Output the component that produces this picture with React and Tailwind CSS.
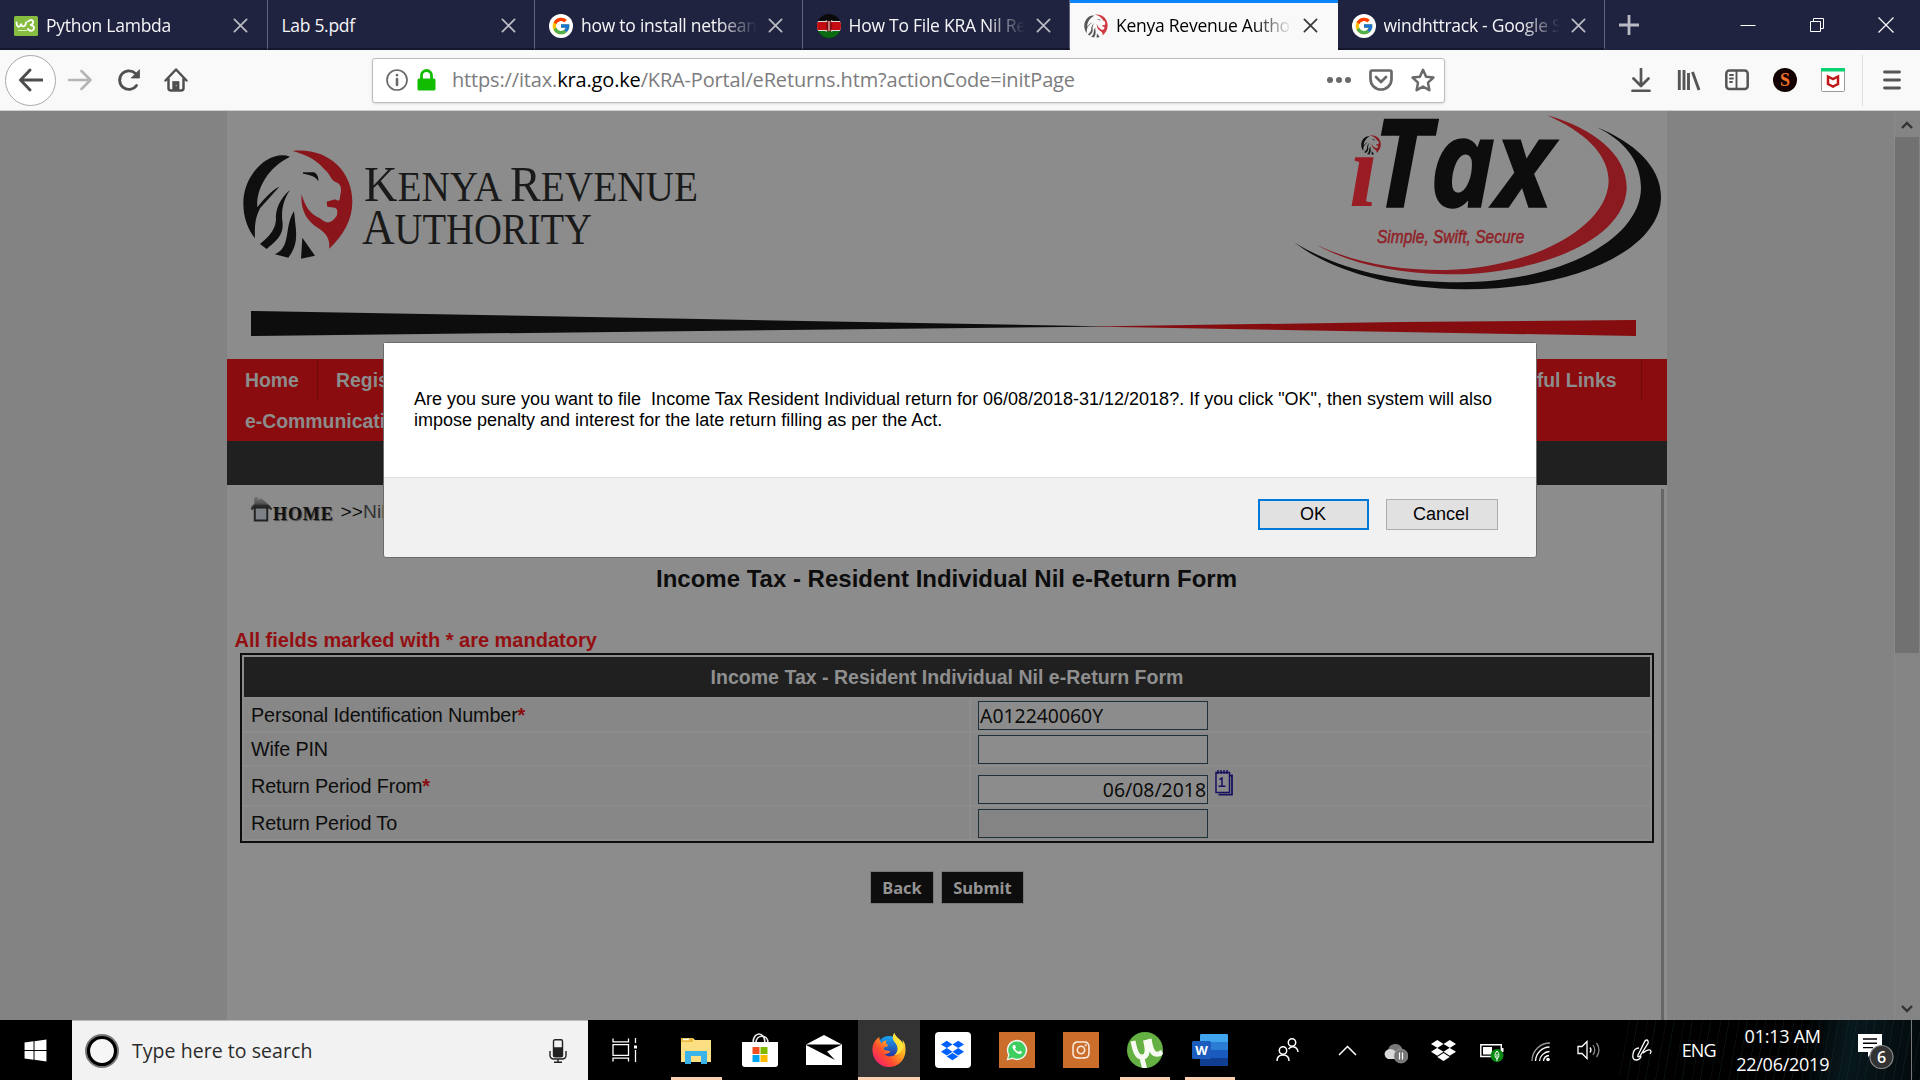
import React from "react";
import { FaDropbox, FaInstagram, FaWindows } from "react-icons/fa";
import { FcGoogle } from "react-icons/fc";

const LION = (
  <>
    <path d="M210 140C150 118 70 190 70 280c0 45 15 80 35 105-2-45 3-65 15-90l58-65c-23 10-53 45-66 62-4-52 28-117 98-152Z" />
    <path d="M210 240c-30 25-45 60-42 90-3 35-28 55-48 72l20 15c25-22 50-37 48-77-6-40 2-70 22-100Z" />
    <path d="M222 303c-22 37-17 72-27 97-7 20-20 28-30 33l40 10c20-28 25-48 23-83Z" />
    <path d="M247 383l38 54-42 9Z" />
    <path d="M249 187h33c10 5 14 16 13 27-5-12-20-19-46-23Z" />
  </>
);
const LION_FACE =
  "M218 123C320 112 397 180 397 275c0 55-27 100-69 141 2-31-10-44-28-58-30-18-60-48-55-105 10 37 25 59 55 72 18 15 30 20 50-7 5-18 0-22-5-25l-23-3-2-15 25-7c10 7 15 4 15-8 5-20 5-35-8-42-22-6-17-23-42-43-20-25-50-40-92-52Z";

function Lion({ className, dark = "#0d0d0d", red = "#8e1a20" }) {
  return (
    <svg className={className} viewBox="66 116 336 334">
      <g fill={dark}>{LION}</g>
      <path d={LION_FACE} fill={red} />
    </svg>
  );
}

function CloseX({ className }) {
  return (
    <svg className={className} viewBox="0 0 16 16" fill="none" stroke="currentColor" strokeWidth="1.9" strokeLinecap="round">
      <path d="M1.5 1.5l13 13M14.5 1.5l-13 13" />
    </svg>
  );
}

function Google() {
  return (
    <span className="flex h-6 w-6 shrink-0 items-center justify-center rounded-full bg-white">
      <FcGoogle size={20} />
    </span>
  );
}

function W3() {
  return (
    <svg className="h-5 w-6 shrink-0" viewBox="0 0 24 20">
      <rect width="24" height="20" rx="1.5" fill="#86bd40" />
      <path d="M2.5 6.5c.5 6 4 5 4.500 1 .5 4 4.500 4 5-1M14 5.500c2-2.500 6-1.500 5 1.500-.5 1.500-2 2-3 2 3 0 5 2 3.500 4.500-1.500 2-4.500 1.500-5.500-.5" fill="none" stroke="#fff" strokeWidth="1.800" strokeLinecap="round" />
      <path d="M4 14.500h9" stroke="#dcefc6" strokeWidth="1" />
    </svg>
  );
}

function KenyaFlag() {
  return (
    <svg className="h-6 w-6 shrink-0" viewBox="0 0 24 24">
      <clipPath id="flagClip"><circle cx="12" cy="12" r="12" /></clipPath>
      <g clipPath="url(#flagClip)">
        <rect width="24" height="24" fill="#0a0a0a" />
        <rect y="7" width="24" height="10" fill="#ddd" />
        <rect y="8" width="24" height="8" fill="#c40d12" />
        <rect y="17" width="24" height="7" fill="#0b6b12" />
        <path d="M9 6l6 12M15 6L9 18" stroke="#bbb" strokeWidth="1" />
        <ellipse cx="12" cy="12" rx="3.200" ry="5.500" fill="#8a0b0e" />
        <path d="M12 7v10" stroke="#eee" strokeWidth="1" />
      </g>
    </svg>
  );
}

const TABS = [
  { title: "Python Lambda", icon: <W3 /> },
  { title: "Lab 5.pdf" },
  { title: "how to install netbeans", icon: <Google /> },
  { title: "How To File KRA Nil Returns", icon: <KenyaFlag /> },
  { title: "Kenya Revenue Authority", icon: <Lion className="h-6 w-6 shrink-0" dark="#555" red="#cf3a40" />, active: true },
  { title: "windhttrack - Google Search", icon: <Google /> },
];

function TabBar() {
  return (
    <div className="flex h-[50px] bg-[#20233f] text-white">
      {TABS.map((t) => (
        <div
          key={t.title}
          className={
            t.active
              ? "flex w-[267.5px] shrink-0 items-center border-t-[3px] border-[#0a84ff] bg-[#f9f9fa] pb-[2px] pl-[14px] text-black"
              : "flex w-[267.5px] shrink-0 items-center border-r border-b-2 border-r-[#626479] border-b-[#14162b] pt-[3px] pl-[14px] text-[#f5f5f8]"
          }
        >
          {t.icon}
          <div className={t.icon ? "ml-2 w-[176px] overflow-hidden whitespace-nowrap text-[17.5px] tracking-[-0.25px] [mask-image:linear-gradient(to_right,#000_78%,transparent_100%)]" : "w-[208px] overflow-hidden whitespace-nowrap text-[17.5px] tracking-[-0.3px]"}>
            {t.title}
          </div>
          <CloseX className={t.active ? "ml-[11px] h-[15px] w-[15px] text-[#3a3a3c]" : "ml-[11px] h-[15px] w-[15px] text-[#b9bac4]"} />
        </div>
      ))}
      <div className="flex grow items-center pl-[13px]">
        <svg className="h-[22px] w-[22px]" viewBox="0 0 22 22" stroke="#b9bac4" strokeWidth="2.800"><path d="M1 11h20M11 1v20" /></svg>
        <div className="ml-auto flex">
          <div className="flex w-[69px] justify-center"><svg className="h-4 w-4" viewBox="0 0 16 16" stroke="#fff"><path d="M.5 8.500h15" /></svg></div>
          <div className="flex w-[69px] justify-center"><svg className="h-4 w-4" viewBox="0 0 16 16" stroke="#fff" fill="none"><path d="M1.500 4.500h10v10h-10zM4.500 4.500v-3h10v10h-3" /></svg></div>
          <div className="flex w-[69px] justify-center"><svg className="h-4 w-4" viewBox="0 0 16 16" stroke="#fff" strokeWidth="1.200"><path d="M.5.5l15 15M15.500.5l-15 15" /></svg></div>
        </div>
      </div>
    </div>
  );
}

function Ico({ children, className = "text-[#555557]", w = 2.5 }) {
  return (
    <svg className={"h-6 w-6 shrink-0 " + className} viewBox="0 0 24 24" fill="none" stroke="currentColor" strokeWidth={w} strokeLinecap="round" strokeLinejoin="round">
      {children}
    </svg>
  );
}

function Toolbar() {
  return (
    <div className="flex h-[61px] items-center border-b border-[#cfcfcf] bg-[#f9f9fa] pl-[5px]">
      <div className="flex h-[51px] w-[51px] items-center justify-center rounded-full border border-[#a9a9ab] bg-white">
        <Ico className="text-[#4d4d4f]" w={2.900}><path d="M23 12H2M11 2L1.500 12l9.500 10" /></Ico>
      </div>
      <Ico className="ml-3 text-[#b4b4b6]"><path d="M1 12h21M13.500 3l9 9-9 9" /></Ico>
      <Ico className="ml-[25px] text-[#505052]" w={2.800}><path d="M19.500 17.500A9.300 9.300 0 1 1 18.500 5.500" /><path d="M22.500 2v8H14.500z" fill="currentColor" strokeWidth=".8" /></Ico>
      <Ico className="ml-[23px] text-[#505052]" w={2.500}><path d="M1.500 12.500L12 1.500l10.500 11M4.500 11v9q0 2.500 2.500 2.500h10q2.500 0 2.500-2.500v-9" /><path d="M9 13.500h6v8.500H9z" fill="currentColor" strokeWidth=".8" /><path d="M12.300 17.500v.1" stroke="#aaa" strokeWidth="1.500" /></Ico>
      <div className="ml-[184px] flex h-[45px] w-[1073px] items-center rounded-[3px] border border-[#bdbdbf] bg-white pl-[12px] shadow-sm">
        <Ico className="text-[#6a6a6c]" w={1.700}><circle cx="12" cy="12" r="10" /><path d="M12 11v6M12 7v.2" strokeWidth="2.600" /></Ico>
        <svg className="ml-[8px] h-[22px] w-[19px]" viewBox="0 0 19 22"><path d="M4.500 10V6.500a5 5 0 0 1 10 0V10" fill="none" stroke="#12bc00" strokeWidth="2.800" /><rect x=".5" y="9.500" width="18" height="12" rx="1.500" fill="#12bc00" /></svg>
        <div className="ml-[16px] whitespace-nowrap text-[20px] tracking-[-0.160px] text-[#7c7c7e]">
          https://itax.<span className="text-black">kra.go.ke</span>/KRA-Portal/eReturns.htm?actionCode=initPage
        </div>
        <div className="mr-[9px] ml-auto flex gap-[18px] text-[#69696b]">
          <svg className="h-6 w-6" viewBox="0 0 24 24" fill="currentColor"><circle cx="3" cy="12" r="3" /><circle cx="12" cy="12" r="3" /><circle cx="21" cy="12" r="3" /></svg>
          <Ico className="text-[#69696b]" w={2.700}><path d="M3 2.500h18a1.500 1.500 0 0 1 1.500 1.500v7a10.500 10.500 0 0 1-21 0V4A1.500 1.500 0 0 1 3 2.500zM7 9l5 5 5-5" /></Ico>
          <Ico className="text-[#69696b]" w={2.500}><path d="M12 1.800l3.100 6.900 7.300.9-5.400 5.100 1.400 7.500L12 18.600l-6.400 3.600L7 14.700 1.600 9.600l7.300-.9z" /></Ico>
        </div>
      </div>
      <Ico className="ml-[184px] text-[#555557]" w={2.700}><path d="M12 1v16M4.500 10.500L12 18l7.500-7.500M3.500 22.800h17" /></Ico>
      <Ico className="ml-6 text-[#555557]"><path d="M2.300 2v20M7 2v20M11.500 5v17M15.500 4l6.500 18" strokeWidth="2.900" strokeLinecap="butt" /></Ico>
      <Ico className="ml-6 text-[#555557]" w={2.500}><rect x="1.300" y="2.500" width="21.400" height="18.500" rx="3" /><path d="M11.500 3v18M5 7h3M5 10.500h3M5 14h2" strokeWidth="1.900" /></Ico>
      <div className="ml-6 flex h-6 w-6 items-center justify-center rounded-full bg-[#120000] font-['Liberation_Serif'] text-[18px] font-bold text-[#f0702a]">S</div>
      <svg className="ml-6 h-6 w-6" viewBox="0 0 24 24"><rect x=".5" y=".5" width="23" height="23" rx="1" fill="#fff" stroke="#999" /><rect width="24" height="3.500" fill="#08d171" /><path d="M7 8.500l5 2.500 5-2.500v7.500L12 18.500 7 16z" fill="none" stroke="#c01818" strokeWidth="2.500" /></svg>
      <div className="ml-[17px] h-[51px] w-px bg-[#dedee0]" />
      <Ico className="ml-[17px] text-[#555557]" w={2.800}><path d="M4.500 4h15M4.500 12h15M4.500 20h15" /></Ico>
    </div>
  );
}

function Header() {
  return (
    <div className="flex h-[248px] flex-col">
      <div className="flex h-[192px] justify-between">
        <svg className="h-[192px] w-[480px]" viewBox="21 3 1440 576">
          <g fill="#0f0f0f">{LION}</g>
          <path d={LION_FACE} fill="#8a151b" />
          <g fill="#1a1a1a" fontFamily="'Liberation Serif', serif">
            <text x="432" y="273" fontSize="152" textLength="1002" lengthAdjust="spacingAndGlyphs">K<tspan fontSize="129">ENYA </tspan>R<tspan fontSize="129">EVENUE</tspan></text>
            <text x="426" y="403" fontSize="152" textLength="690" lengthAdjust="spacingAndGlyphs">A<tspan fontSize="130">UTHORITY</tspan></text>
          </g>
        </svg>
        <svg className="h-[192px] w-[400px]" viewBox="81 33 1200 576">
          <path fill="#8a1a1f" d="M922 46C1060 85 1162 165 1160 265 1155 420 900 525 620 523 460 520 330 490 230 435 350 490 480 512 620 510 860 505 1100 390 1106 245 1106 160 1030 95 922 46Z" />
          <path fill="#0d0d0d" d="M1070 82C1180 125 1263 200 1263 290 1263 450 1000 570 670 568 450 565 270 510 162 427 290 505 450 547 660 547 960 545 1200 420 1203 265 1203 180 1150 120 1070 82Z" />
          <g transform="translate(351 84) scale(.18)">
            <g fill="#0d0d0d">{LION}</g>
            <path d={LION_FACE} fill="#8a1a1f" />
          </g>
          <text x="328" y="318" fontFamily="'Liberation Serif', serif" fontSize="318" fontWeight="bold" fontStyle="italic" fill="#9a1c24" textLength="86" lengthAdjust="spacingAndGlyphs">ı</text>
          <text x="398" y="320" fontFamily="'Open Sans', sans-serif" fontSize="368" fontWeight="bold" fontStyle="italic" fill="#0d0d0d" stroke="#0d0d0d" strokeWidth="5" textLength="540" lengthAdjust="spacingAndGlyphs">Tax</text>
          <text x="411" y="430" fontFamily="'Liberation Sans', sans-serif" fontSize="56" fontStyle="italic" fill="#8f2228" stroke="#8f2228" strokeWidth="1.500" textLength="442" lengthAdjust="spacingAndGlyphs">Simple, Swift, Secure</text>
        </svg>
      </div>
      <svg className="h-[56px] w-[1440px]" viewBox="227 303 1440 56">
        <path d="M251 311L700 319 1110 326.500 700 331 251 336Z" fill="#0d0d0d" />
        <path d="M1090 326.500L1400 322 1636 320V336L1400 332Z" fill="#850d10" />
      </svg>
    </div>
  );
}

function Nav() {
  return (
    <>
      <div className="flex h-[82px] flex-col bg-[#8a0c0e] text-[19.4px] font-bold text-[#8c8c8c]">
        <div className="flex h-[41px] items-center leading-none">
          <div className="flex h-full w-[91px] items-center border-r border-[#6b0a0b] pt-[2px] pl-[18px]">Home</div>
          <div className="pt-[2px] pl-[18px]">Registration</div>
          <div className="ml-auto flex h-full items-center border-r border-[#6b0a0b] pt-[2px] pr-[24.5px]">Useful Links</div>
          <div className="w-[25px]" />
        </div>
        <div className="flex h-[41px] items-center pt-[2px] pl-[18px] leading-none">e-Communication</div>
      </div>
      <div className="h-[44px] bg-[#202020]" />
    </>
  );
}

function Calendar() {
  return (
    <svg className="mt-[3px] ml-[7px] h-[26px] w-[18px] self-start" viewBox="0 0 18 26" fill="none" stroke="#17125f" strokeWidth="1.500">
      <path d="M3.500 24.700H17V5.500h-2" strokeWidth="1.800" />
      <path d="M1 2.500h13.500v20H1z" fill="#8a8a8c" />
      <path d="M3 0v4M6 0v4M9 0v4M12 0v4" />
      <path d="M4.500 9.500L7 8v8M3.500 16.200h7" strokeWidth="1.500" />
    </svg>
  );
}

const ROWS = [
  { label: "Personal Identification Number", req: true, value: "A012240060Y", row: "flex h-[32px] gap-[2px]", field: "bg-[#8c8c8c]" },
  { label: "Wife PIN", row: "flex h-[32px] gap-[2px]", field: "bg-[#8c8c8c]" },
  { label: "Return Period From", req: true, value: "06/08/2018", row: "flex h-[38px] gap-[2px]", field: "mt-[6px] justify-end bg-[#8c8c8c]", cal: true },
  { label: "Return Period To", row: "flex h-[32px] gap-[2px]", field: "bg-[#848484]" },
];

function Form() {
  return (
    <div className="ml-[13px] w-[1414px] border-2 border-[#0d0d0d] p-[2px]">
      <div className="flex h-[40px] items-center justify-center bg-[#202020] pt-px text-[19.55px] font-bold text-[#8f8f8f]">
        Income Tax - Resident Individual Nil e-Return Form
      </div>
      <div className="flex flex-col gap-[2px] pt-[2px]">
        {ROWS.map((r) => (
          <div key={r.label} className={r.row}>
            <div className="flex w-[725px] items-center bg-[#878787] pt-px pl-[7px] text-[19.8px] tracking-[-0.130px] text-[#0d0d0d]">
              {r.label}
              {r.req && <span className="font-bold text-[#8a0c0e]">*</span>}
            </div>
            <div className="flex grow items-center bg-[#878787] pl-[7px]">
              <div className={"flex h-[29px] w-[230px] items-center border border-[#1f303d] px-[1px] pt-px font-['Noto_Sans'] text-[19.400px] text-[#0d0d0d] " + r.field}>
                {r.value}
              </div>
              {r.cal && <Calendar />}
            </div>
          </div>
        ))}
      </div>
    </div>
  );
}

function Page() {
  return (
    <div className="flex h-[909px] overflow-hidden bg-[#838383] font-['Liberation_Sans',sans-serif]">
      <div className="ml-[227px] flex w-[1440px] flex-col bg-[#8c8c8c]">
        <Header />
        <Nav />
        <div className="mt-1 mr-[3px] flex grow flex-col border-r-[3px] border-[#666]">
          <div className="flex h-[64px] items-start pt-2 pl-[23px]">
            <svg className="h-[25px] w-[23px]" viewBox="0 0 23 26">
              <defs><linearGradient id="hg" x2="0" y2="1"><stop stopColor="#777" /><stop offset="1" stopColor="#333" /></linearGradient></defs>
              <path d="M4 0h4v3l3-2 10 9v2H1V10l3-3z" fill="url(#hg)" />
              <path d="M4.500 11h13v13.500h-13z" fill="#7b8186" stroke="#222" strokeWidth="2" />
              <path d="M1 13l4-4h13l4 4" fill="none" stroke="#2a2a2a" strokeWidth="2" />
            </svg>
            <span className="mt-[5px] font-['Liberation_Serif'] text-[18px] leading-[24px] font-bold tracking-[0.900px] text-[#111] [text-shadow:1px_1px_1px_#444]">HOME</span>
            <span className="mt-[3px] ml-[7px] text-[19.200px] leading-[24px] text-[#0d0d0d]">&gt;&gt;<span className="text-[#333]">Nil Return</span></span>
          </div>
          <h1 className="mt-[11px] pl-[5px] text-center text-[24px] leading-[30px] font-bold text-[#0d0d0d]">
            Income Tax - Resident Individual Nil e-Return Form
          </h1>
          <p className="mt-[34px] mb-px ml-[7.500px] text-[20px] leading-[24px] font-bold text-[#930f12]">All fields marked with * are mandatory</p>
          <Form />
          <div className="mt-[28px] ml-[643px] flex gap-[7px] font-['Noto_Sans'] text-[16.500px] font-bold text-[#939393]">
            <div className="flex h-[33px] w-[64px] items-center justify-center border border-[#787878] bg-[#0d0d0d] pt-px">Back</div>
            <div className="flex h-[33px] w-[83px] items-center justify-center border border-[#787878] bg-[#0d0d0d] pt-px">Submit</div>
          </div>
        </div>
      </div>
      <div className="ml-auto flex w-[26px] flex-col items-center border-l border-[#8a8a8a] bg-[#848484] pr-px">
        <svg className="mt-[10px] mb-[8px] h-2 w-3" viewBox="0 0 12 8" fill="none" stroke="#333" strokeWidth="2.400"><path d="M1 7l5-5 5 5" /></svg>
        <div className="h-[516px] w-6 bg-[#717171]" />
        <svg className="mt-auto mb-[7px] h-2 w-3" viewBox="0 0 12 8" fill="none" stroke="#333" strokeWidth="2.400"><path d="M1 1l5 5 5-5" /></svg>
      </div>
    </div>
  );
}

function Dialog() {
  return (
    <div className="absolute top-[342px] left-[383px] flex h-[216px] w-[1154px] flex-col rounded-[3px] border border-[#6b6b6b] bg-[#f1f1f1] font-['Liberation_Sans',sans-serif] text-[18px] text-black">
      <div className="h-[135px] border-b border-[#dfdfdf] bg-white pt-[46px] pl-[30px] leading-[21px] whitespace-pre">
        <div>{'Are you sure you want to file  Income Tax Resident Individual return for 06/08/2018-31/12/2018?. If you click "OK", then system will also'}</div>
        <div>impose penalty and interest for the late return filling as per the Act.</div>
      </div>
      <div className="mt-[21px] mr-[38px] flex justify-end gap-[17px]">
        <div className="flex h-[31px] w-[111px] items-center justify-center border-2 border-[#0078d7] bg-[#e1e1e1] pr-px pb-px">OK</div>
        <div className="flex h-[31px] w-[112px] items-center justify-center border border-[#adadad] bg-[#e1e1e1] pr-[2px] pb-px">Cancel</div>
      </div>
    </div>
  );
}

const APPS = [
  { id: "files", open: "w-[51px]", icon: (
    <svg className="h-[27px] w-8" viewBox="0 0 32 27"><path d="M1 1h12l2 2h16v22H1z" fill="#fcdf83" /><path d="M1 1h12v4H1z" fill="#eabb3f" /><path d="M3 2.500h6" stroke="#fff" strokeWidth="1.500" /><path d="M5 27V14h22v13h-6v-8H11v8z" fill="#3ab3e8" /></svg>) },
  { id: "store", icon: (
    <svg className="h-[34px] w-9" viewBox="0 0 36 34"><path d="M12 10c0-12 12-12 12 0M15 10c0-9 12-9 12 0" fill="none" stroke="#eee" strokeWidth="1.600" transform="translate(-1)" /><path d="M0 9h36v22q0 3-3 3H3q-3 0-3-3z" fill="#fff" /><path d="M10.500 14h7v7h-7z" fill="#f25022" /><path d="M18.500 14h7v7h-7z" fill="#7fba00" /><path d="M10.500 22h7v7h-7z" fill="#00a4ef" /><path d="M18.500 22h7v7h-7z" fill="#ffb900" /></svg>) },
  { id: "mail", icon: (
    <svg className="h-[30px] w-9" viewBox="0 0 36 30"><path d="M0 9.500L18 0l18 9.500V30H0z" fill="#fff" /><path d="M0 9.500h36L21 16.500 29 25 0 10z" fill="#000" /></svg>) },
  { id: "firefox", open: "w-[62px]", active: true, icon: (
    <svg className="h-[34px] w-[34px]" viewBox="0 0 34 34">
      <defs>
        <linearGradient id="ff1" x1="1" y1="0" x2="0" y2="1"><stop stopColor="#fff44f" /><stop offset=".35" stopColor="#ffb01f" /><stop offset=".65" stopColor="#ff4a2f" /><stop offset="1" stopColor="#e8118f" /></linearGradient>
        <linearGradient id="ff2" x1="0" y1="0" x2="0" y2="1"><stop stopColor="#1aa7f5" /><stop offset="1" stopColor="#2b1f8f" /></linearGradient>
      </defs>
      <circle cx="17" cy="15" r="12" fill="url(#ff2)" />
      <path d="M22.500 0c-3 4-1.500 7 1 10 3 4 3 9-1 12-4 2.500-8 1.500-10-1 3 .5 4-1.500 6-2-1-2-4-1-6-2-1.500-1-1-3 1-3 2 0 3-1.500 2-2.500-1.500-.5-2-2-1-4-3 0-4.500 1.500-5 3C8 8.500 7 6 7.500 4 1 8 0 14 .5 18.500 1.500 28 8.500 34 17 34s16-6 16.500-16c.3-6-1-9-3-11 0 0 .5 2 .2 3.500C29 6 23.500 5 22.500 0z" fill="url(#ff1)" />
      <path d="M22.500 0c-3 4-1.500 7 1 10 4 5 2 10-1 12 8-1 10-9 8.200-11.500C29 6 23.500 5 22.500 0z" fill="#ffe23c" />
    </svg>) },
  { id: "dropbox", icon: <span className="flex h-9 w-9 items-center justify-center rounded-[4px] bg-white text-[#0061fe]"><FaDropbox size={23} /></span> },
  { id: "whatsapp", icon: (
    <span className="flex h-9 w-9 items-center justify-center bg-[#cb6d2b]">
      <svg className="h-[22px] w-[22px]" viewBox="0 0 22 22"><path d="M.5 21.500l1.600-5.600A10.200 10.200 0 1 1 6.300 20z" fill="#f3f3ee" /><path d="M2.300 19.700l1.200-4.100A8.700 8.700 0 1 1 6.500 18.600z" fill="#3fcf60" /><path d="M7.500 6c-1.500 1-1.300 3 .5 5.200s4.200 4 6 3.800c1.500-.3 2.200-1.600 1.800-2.300l-2-1-1.200 1.200c-1.800-.7-3-2-3.600-3.400l1-1.100-1-2.300z" fill="#fff" /></svg>
    </span>) },
  { id: "instagram", icon: <span className="flex h-9 w-9 items-center justify-center bg-[#cb6d2b] text-[#fbe9dc]"><FaInstagram size={20} /></span> },
  { id: "utorrent", open: "w-[50px]", icon: (
    <svg className="h-9 w-9" viewBox="0 0 36 36"><clipPath id="utClip"><circle cx="18" cy="18" r="18" /></clipPath><g clipPath="url(#utClip)"><rect width="36" height="36" fill="#64b043" /><path d="M6 9c2 10 4 17 10 16 5-1 5-7 2.500-17M22 7c1.500 9 3 14 6.500 15 3 1 5-.5 7-2M14.500 24l3.500 14" fill="none" stroke="#f6faf2" strokeWidth="5" /></g></svg>) },
  { id: "word", open: "w-[50px]", icon: (
    <svg className="h-8 w-9" viewBox="0 0 36 32"><rect x="8" width="28" height="32" rx="1.500" fill="#2b7cd3" /><path d="M8 1.500Q8 0 9.500 0h25Q36 0 36 1.500V8H8z" fill="#41a5ee" /><path d="M8 16h28v8H8z" fill="#185abd" /><path d="M8 24h28v6.500q0 1.500-1.500 1.500h-25Q8 32 8 30.500z" fill="#103f91" /><rect y="7" width="19" height="18" rx="1.500" fill="#1b5cbe" /><text x="9.500" y="21" fontSize="13" fontWeight="bold" fill="#fff" textAnchor="middle" fontFamily="'Open Sans', sans-serif">W</text></svg>) },
];

function Tray({ className, children }) {
  return <div className={"flex h-full shrink-0 items-center justify-center " + className}>{children}</div>;
}

function Taskbar() {
  return (
    <div className="flex h-[60px] bg-black text-white">
      <Tray className="w-[72px]"><FaWindows size={25} className="mr-px" /></Tray>
      <div className="flex w-[516px] shrink-0 items-center border-t border-[#bcbcbc] bg-[#f2f2f2] pl-[13px] text-[#2b2b2b]">
        <svg className="h-[34px] w-[34px]" viewBox="0 0 34 34"><circle cx="17" cy="17" r="15.500" fill="none" stroke="#777" strokeWidth="3" /><circle cx="17" cy="17" r="13.500" fill="#f6f6f6" stroke="#000" strokeWidth="3.200" /></svg>
        <span className="ml-[13px] text-[19.500px] tracking-[0.050px] whitespace-nowrap">Type here to search</span>
        <svg className="mr-[21px] ml-auto h-6 w-[18px]" viewBox="0 0 18 24" fill="none" stroke="#222" strokeWidth="1.400"><rect x="4.500" y=".8" width="9" height="17" rx="1.500" /><path d="M5 9h8v8H5z" fill="#222" /><path d="M1 12v4q0 4 4 4h8q4 0 4-4v-4M9 20v3M5 23.200h8" /></svg>
      </div>
      <Tray className="w-[76px]">
        <svg className="mr-[3px] h-6 w-[26px]" viewBox="0 0 26 24" fill="none" stroke="#fff" strokeWidth="1.300"><path d="M1 .5v3.300h15.500V.5M1 23.500v-3.300h15.500v3.300M1 6.700h15.500v10.600H1zM23.500 0v5M23.500 12v12" /><path d="M22 7.500h3v3h-3z" fill="#fff" stroke="none" /></svg>
      </Tray>
      {APPS.map((a) => (
        <div key={a.id} className="flex w-[64.2px] shrink-0 flex-col items-center">
          <div className={a.active ? "flex h-[57px] w-[62px] items-center justify-center bg-[#333] pt-[3px]" : "flex h-[57px] w-full items-center justify-center pt-[3px]"}>{a.icon}</div>
          {a.open && <div className={"h-[3px] bg-[#fcd0b0] " + a.open} />}
        </div>
      ))}
      <div className="flex grow bg-[repeating-linear-gradient(100deg,transparent_0_9px,rgba(40,80,90,0.16)_9px_10px,transparent_10px_17px,rgba(30,70,80,0.22)_17px_18px),linear-gradient(100deg,transparent_60%,rgba(20,60,72,0.4)_75%,rgba(20,60,72,0.15)_100%)] [background-size:300px_60px] bg-right bg-no-repeat">
        <Tray className="w-[92px]">
          <svg className="h-6 w-[23px]" viewBox="0 0 23 24" fill="none" stroke="#fff" strokeWidth="1.500"><circle cx="16" cy="4.500" r="3.700" /><circle cx="7" cy="12.500" r="3.700" /><path d="M1 23q0-6 6-6t6 6M12.500 11q2-2.500 4.500-2.300 4.500.3 5 5.300" /></svg>
        </Tray>
        <Tray className="mr-[10px] w-[28px]"><svg className="h-[11px] w-[19px]" viewBox="0 0 19 11" fill="none" stroke="#fff" strokeWidth="1.500"><path d="M1 10l8.500-8.500L18 10" /></svg></Tray>
        <Tray className="w-12">
          <svg className="mt-[3px] h-[25px] w-[25px]" viewBox="0 0 25 25"><path d="M5 20a5 5 0 0 1 0-9 7.500 7.500 0 0 1 14-2v11z" fill="#777" /><path d="M5 20a5 5 0 0 1-1-9q5-3 9 2l3 7z" fill="#d8d8d8" /><circle cx="18" cy="17" r="7" fill="#777" stroke="#aaa" strokeWidth=".6" /><path d="M16.500 13.500v7M19.500 13.500v7" stroke="#fff" strokeWidth="1.200" /></svg>
        </Tray>
        <Tray className="w-12"><FaDropbox size={25} /></Tray>
        <Tray className="w-[49px]">
          <svg className="mt-1 h-[19px] w-6" viewBox="0 0 24 19"><path d="M.8 1.800h20.500v11.700H.8z" fill="none" stroke="#fff" strokeWidth="1.400" /><path d="M3 4h9v7.500H3zM22 5h1.500v4H22z" fill="#fff" /><circle cx="17" cy="12.500" r="6.500" fill="#0a8a14" /><path d="M17 8q-4 4.500 0 8 4-3.500 0-8zM17 11v7" fill="none" stroke="#fff" /></svg>
        </Tray>
        <Tray className="w-12">
          <svg className="mt-[3px] h-5 w-5" viewBox="0 0 20 20" fill="none" stroke="#fff" strokeWidth="1.300"><path d="M12.500 19a6 6 0 0 1 5.500-5.500M8.500 19A10.500 10.500 0 0 1 18.500 9.500M4.500 19A14.500 14.500 0 0 1 18.500 5" /><path d="M1 19A18 18 0 0 1 19 1" stroke="#999" /><circle cx="17" cy="17.500" r="1.800" fill="#fff" stroke="none" /></svg>
        </Tray>
        <Tray className="w-12">
          <svg className="h-5 w-6" viewBox="0 0 24 20" fill="none" stroke="#fff" strokeWidth="1.300"><path d="M1 6.500h4l5-5v17l-5-5H1z" /><path d="M13 7.500q2 2.500 0 5" /><path d="M16 5q3.500 5 0 10M19.500 3q5 7 0 14" stroke="#888" /></svg>
        </Tray>
        <Tray className="w-[58px]">
          <svg className="h-6 w-[22px]" viewBox="0 0 22 24" fill="none" stroke="#fff" strokeWidth="1.300"><path d="M7 17l7-14q2-2 3 0t-1 4L9 18q-3 2-2-1zM8 10q-5 0-6 6-1 6 3 6t5-4M12 15q5-4 7-3t0 4" /></svg>
        </Tray>
        <Tray className="w-[56px] text-[18px] tracking-[-0.900px]">ENG</Tray>
        <Tray className="w-[112px] flex-col text-[18px] leading-[28px] tracking-[-0.250px] whitespace-nowrap">
          <span>01:13 AM</span>
          <span>22/06/2019</span>
        </Tray>
        <Tray className="w-[72px]">
          <svg className="mt-1 ml-[3px] h-9 w-9" viewBox="0 0 36 36"><path d="M0 0h24v18H15l-5 5-0-5H0z" fill="#fff" /><path d="M5 5h14M5 9.300h14M5 13.600h10" stroke="#000" strokeWidth="1.400" /><circle cx="23.500" cy="23" r="11.500" fill="#333" stroke="#8a8a8a" strokeWidth="1.200" /><text x="23.500" y="29" fontSize="16" fontWeight="600" fill="#fff" textAnchor="middle" fontFamily="'Open Sans', sans-serif">6</text></svg>
        </Tray>
        <div className="w-px shrink-0 bg-[#777]" />
      </div>
    </div>
  );
}

export default function App() {
  return (
    <div className="relative h-[1080px] w-[1920px] overflow-hidden font-['Open_Sans','Noto_Sans',sans-serif]">
      <TabBar />
      <Toolbar />
      <Page />
      <Taskbar />
      <Dialog />
    </div>
  );
}
